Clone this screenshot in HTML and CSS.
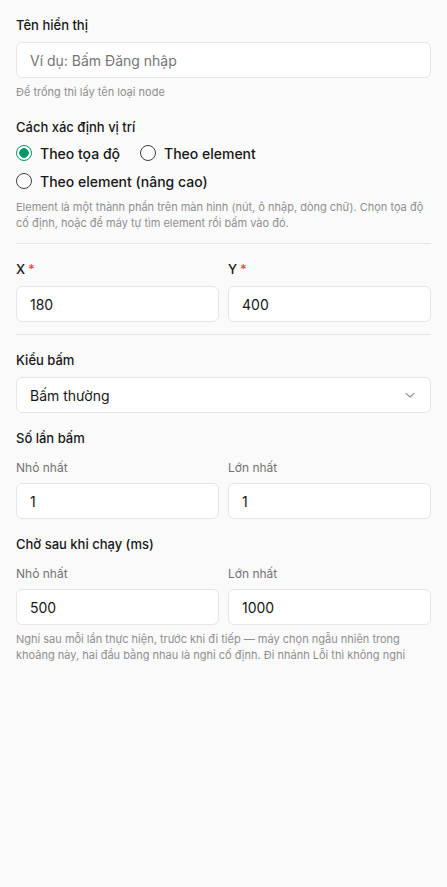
FILE: index.html
```html
<!DOCTYPE html>
<html lang="vi">
<head>
    <meta charset="UTF-8">
    <meta name="viewport" content="width=device-width, initial-scale=1.0">
    <title>Cấu hình node Bấm</title>
    <link rel="stylesheet" href="styles.css">
</head>
<body>
    <div class="panel">
        <div class="field loose">
            <label class="label">Tên hiển thị</label>
            <input class="input" type="text" placeholder="Ví dụ: Bấm Đăng nhập">
            <p class="hint">Để trống thì lấy tên loại node</p>
        </div>

        <div class="field tight">
            <label class="label">Cách xác định vị trí</label>
            <div class="radios">
                <label class="radio"><span class="dot checked"></span>Theo tọa độ</label>
                <label class="radio"><span class="dot"></span>Theo element</label>
                <label class="radio"><span class="dot"></span>Theo element (nâng cao)</label>
            </div>
            <p class="hint">Element là một thành phần trên màn hình (nút, ô nhập, dòng chữ). Chọn tọa độ cố định, hoặc để máy tự tìm element rồi bấm vào đó.</p>
        </div>

        <hr class="divider">

        <div class="row">
            <div>
                <label class="label">X<span class="req">*</span></label>
                <input class="input" type="text" value="180">
            </div>
            <div>
                <label class="label">Y<span class="req">*</span></label>
                <input class="input" type="text" value="400">
            </div>
        </div>

        <hr class="divider spaced">

        <div class="field">
            <label class="label">Kiểu bấm</label>
            <div class="select">
                <span>Bấm thường</span>
                <svg width="16" height="16" viewBox="0 0 24 24" fill="none" stroke="#8a8a8a" stroke-width="1.6" stroke-linecap="round" stroke-linejoin="round"><path d="M6 9.5l6 5.5 6-5.5"/></svg>
            </div>
        </div>

        <div class="field">
            <label class="label">Số lần bấm</label>
            <div class="row sub">
                <div>
                    <label class="sublabel">Nhỏ nhất</label>
                    <input class="input" type="text" value="1">
                </div>
                <div>
                    <label class="sublabel">Lớn nhất</label>
                    <input class="input" type="text" value="1">
                </div>
            </div>
        </div>

        <div class="field">
            <label class="label">Chờ sau khi chạy (ms)</label>
            <div class="row sub">
                <div>
                    <label class="sublabel">Nhỏ nhất</label>
                    <input class="input" type="text" value="500">
                </div>
                <div>
                    <label class="sublabel">Lớn nhất</label>
                    <input class="input" type="text" value="1000">
                </div>
            </div>
            <p class="hint">Nghỉ sau mỗi lần thực hiện, trước khi đi tiếp — máy chọn ngẫu nhiên trong khoảng này, hai đầu bằng nhau là nghỉ cố định. Đi nhánh Lỗi thì không nghỉ</p>
        </div>
    </div>
</body>
</html>
```

FILE: styles.css
```css
body {
    margin: 0;
    background: #fafafa;
    font-family: Inter, "Noto Sans", sans-serif;
    color: #171717;
}
.panel {
    padding: 16px;
}
.field {
    margin-bottom: 16px;
}
.field.loose {
    margin-bottom: 18px;
}
.field.tight {
    margin-bottom: 12px;
}
.label {
    display: block;
    font-size: 13px;
    line-height: 18px;
    font-weight: 500;
    margin-bottom: 8px;
}
.req {
    color: #ef4444;
    margin-left: 3px;
}
.sublabel {
    display: block;
    font-size: 12px;
    line-height: 16px;
    color: #737373;
    margin-bottom: 7px;
}
.input, .select {
    display: block;
    box-sizing: border-box;
    width: 100%;
    height: 36px;
    padding: 0 13px;
    background: #fff;
    border: 1px solid #e5e5e5;
    border-radius: 6px;
    font-family: inherit;
    font-size: 14px;
    color: #171717;
    outline: none;
}
.input::placeholder {
    color: #757575;
}
.select {
    display: flex;
    align-items: center;
    justify-content: space-between;
    padding-right: 12px;
}
.hint {
    margin: 6px 0 0;
    font-size: 11px;
    line-height: 16px;
    color: #8f8f8f;
}
.radios {
    display: flex;
    flex-wrap: wrap;
    column-gap: 20px;
    row-gap: 4px;
    margin: -3px 0 5px;
}
.radio {
    display: flex;
    align-items: center;
    gap: 8px;
    height: 24px;
    font-size: 14px;
    font-weight: 500;
}
.dot {
    box-sizing: border-box;
    width: 16px;
    height: 16px;
    border-radius: 50%;
    border: 1px solid #3f3f3f;
    background: #fff;
}
.dot.checked {
    border-color: #059669;
    background: radial-gradient(circle, #059669 0 4.5px, #fff 5px);
}
.radios .radio:nth-child(3) {
    flex-basis: 100%;
}
.divider {
    border: 0;
    border-top: 1px solid #e5e5e5;
    margin: 0 0 16px;
}
.divider.spaced {
    margin-top: 12px;
}
.row {
    display: grid;
    grid-template-columns: 1fr 1fr;
    gap: 9px;
}
.row.sub {
    padding-top: 5px;
}
```
